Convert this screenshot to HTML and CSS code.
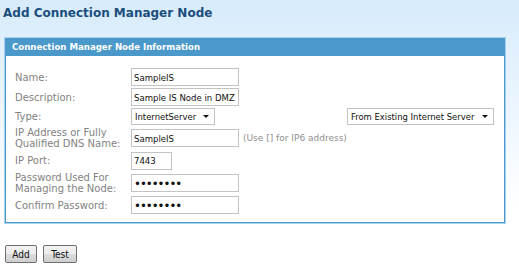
FILE: index.html
```html
<!DOCTYPE html>
<html lang="en">
  <head>
    <meta charset="UTF-8" />
    <title>Add Connection Manager Node</title>
    <link rel="stylesheet" href="styles.css">
  </head>
  <body>
    <h1 class="page-title">Add Connection Manager Node</h1>

    <!-- Node information panel -->
    <div class="panel">
      <div class="panel-inner">
        <div class="panel-head">Connection Manager Node Information</div>
        <div class="form">
          <div class="label">Name:</div>
          <div class="cell"><input type="text" class="field field-wide" value="SampleIS" /></div>

          <div class="label">Description:</div>
          <div class="cell"><input type="text" class="field field-wide" value="Sample IS Node in DMZ" /></div>

          <div class="label">Type:</div>
          <div class="cell cell-split">
            <div class="select select-type">InternetServer<span class="arrow"></span></div>
            <div class="select select-source">From Existing Internet Server<span class="arrow"></span></div>
          </div>

          <div class="label">IP Address or Fully<br />Qualified DNS Name:</div>
          <div class="cell">
            <input type="text" class="field field-wide" value="SampleIS" />
            <span class="hint">(Use [] for IP6 address)</span>
          </div>

          <div class="label">IP Port:</div>
          <div class="cell"><input type="text" class="field field-port" value="7443" /></div>

          <div class="label">Password Used For<br />Managing the Node:</div>
          <div class="cell"><input type="password" class="field field-wide" value="12345678" /></div>

          <div class="label">Confirm Password:</div>
          <div class="cell"><input type="password" class="field field-wide" value="12345678" /></div>
        </div>
      </div>
    </div>

    <div class="actions">
      <button class="btn btn-add">Add</button>
      <button class="btn btn-test">Test</button>
    </div>
  </body>
</html>
```

FILE: styles.css
```css
/* Page */
body {
  margin: 0;
  min-height: 269px;
  font-family: "DejaVu Sans", sans-serif;
  background: #fff linear-gradient(#d7ebfb, #e8f4fe 90px, #fff 210px) no-repeat;
}

.page-title {
  margin: 0;
  padding: 5px 0 0 3px;
  height: 17px;
  font-size: 12px;
  line-height: 16px;
  font-weight: bold;
  color: #1b4e7c;
}

/* Panel with double border */
.panel {
  margin: 15px 0 0 4px;
  width: 500px;
  border: 1px solid #a9d2ef;
}

.panel-inner {
  border: 1px solid #4a98cb;
  background: #fff;
  padding-bottom: 7px;
}

.panel-head {
  height: 17px;
  line-height: 17px;
  padding-left: 6px;
  background-color: #4b98cb;
  color: #fff;
  font-size: 8.6px;
  font-weight: bold;
}

/* Form rows */
.form {
  display: grid;
  grid-template-columns: 116px 1fr;
  grid-template-rows: 20px 20px 19px 24px 21px 24px 20px;
  align-items: center;
  margin: 11px 9px 0 9px;
}

.label {
  font-size: 10px;
  line-height: 11px;
  color: #828282;
}

.cell {
  display: flex;
  align-items: center;
}

.cell-split {
  justify-content: space-between;
}

.field {
  box-sizing: border-box;
  height: 18px;
  margin: 0;
  padding: 0 1px 0 2px;
  border: 1px solid #c3c3c3;
  background: #fff;
  font-family: "DejaVu Sans Condensed", "DejaVu Sans", sans-serif;
  font-stretch: condensed;
  font-size: 9.5px;
  color: #111;
  outline: none;
}

.field-wide {
  width: 108px;
}

.field-port {
  width: 41px;
}

.field[type="password"] {
  font-size: 13px;
  letter-spacing: -1px;
}

.hint {
  margin-left: 4px;
  font-size: 9px;
  color: #8f8f8f;
}

/* Drop-down lookalikes */
.select {
  position: relative;
  box-sizing: border-box;
  height: 17px;
  line-height: 15px;
  padding-left: 3px;
  border: 1px solid #c3c3c3;
  background: #fff;
  font-family: "DejaVu Sans Condensed", "DejaVu Sans", sans-serif;
  font-stretch: condensed;
  font-size: 9.4px;
  color: #111;
}

.select-type {
  width: 84px;
}

.select-source {
  width: 147px;
  margin-right: 1px;
}

.arrow {
  position: absolute;
  right: 5px;
  top: 6px;
  border-left: 3px solid transparent;
  border-right: 3px solid transparent;
  border-top: 3px solid #111;
}

/* Buttons */
.actions {
  display: flex;
  gap: 6px;
  margin: 21px 0 0 5px;
}

.btn {
  box-sizing: border-box;
  height: 18px;
  padding: 0;
  border: 1px solid #707070;
  border-radius: 2px;
  background: linear-gradient(#f2f2f2, #ebebeb 50%, #dddddd 51%, #cfcfcf);
  font-family: "DejaVu Sans Condensed", "DejaVu Sans", sans-serif;
  font-stretch: condensed;
  font-size: 10px;
  color: #111;
}

.btn-add {
  width: 32px;
}

.btn-test {
  width: 34px;
}
```
